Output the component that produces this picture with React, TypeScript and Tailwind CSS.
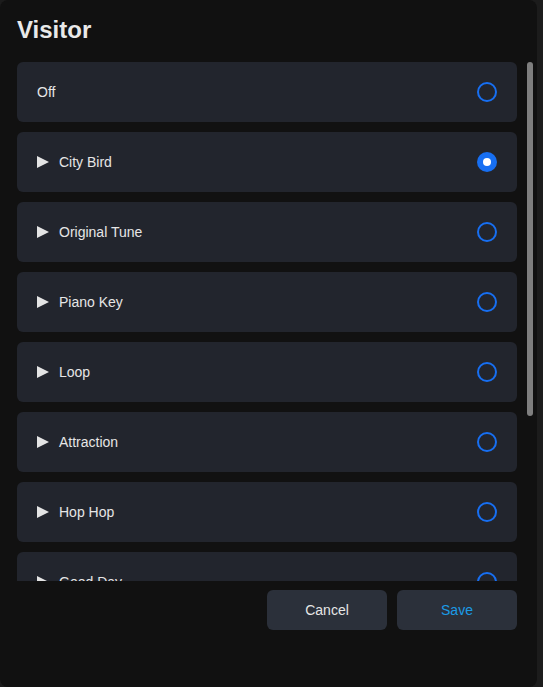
import React, { useState } from "react";

const sounds = ["City Bird", "Original Tune", "Piano Key", "Loop", "Attraction", "Hop Hop", "Good Day"];

const Radio: React.FC<{ checked: boolean }> = ({ checked }) =>
  checked ? (
    <span className="flex h-5 w-5 items-center justify-center rounded-full bg-[#176ff2]">
      <span className="h-2 w-2 rounded-full bg-white" />
    </span>
  ) : (
    <span className="h-5 w-5 rounded-full border-2 border-[#176ff2]" />
  );

const PlayIcon = () => (
  <svg width="12" height="12" viewBox="0 0 12 12" className="shrink-0">
    <path d="M0 0 L12 6 L0 12 Z" fill="#e4e4e4" />
  </svg>
);

export default function App() {
  const [selected, setSelected] = useState("City Bird");

  return (
    <div className="h-[687px] w-full bg-[#1c1c1c] font-['Liberation_Sans',Arial,sans-serif]">
      <div className="flex h-full w-[537px] flex-col rounded-lg bg-[#111111]">
        <h1 className="px-[17px] pt-[14px] text-2xl leading-8 font-bold text-[#e9e9e9]">Visitor</h1>

        <div className="mt-4 flex h-[519px] overflow-hidden">
          {/* list */}
          <div className="ml-[17px] flex w-[500px] shrink-0 flex-col gap-[10px]">
            <button
              onClick={() => setSelected("Off")}
              className="flex h-[60px] shrink-0 items-center justify-between rounded-md bg-[#22252d] pb-px pl-5 pr-5 text-left"
            >
              <span className="text-sm leading-4 text-[#e6e6e6]">Off</span>
              <Radio checked={selected === "Off"} />
            </button>
            {sounds.map((s) => (
              <button
                key={s}
                onClick={() => setSelected(s)}
                className="flex h-[60px] shrink-0 items-center justify-between rounded-md bg-[#22252d] pb-px pl-5 pr-5 text-left"
              >
                <span className="flex items-center gap-[10px] text-sm leading-4 text-[#e6e6e6]">
                  <PlayIcon />
                  {s}
                </span>
                <Radio checked={selected === s} />
              </button>
            ))}
          </div>
          {/* scrollbar */}
          <div className="ml-[10px] w-[6px]">
            <div className="h-[354px] w-[6px] rounded-full bg-[#7f7f7f]" />
          </div>
        </div>

        <div className="mt-[9px] flex justify-end gap-[10px] pr-[20px]">
          <button className="h-10 w-[120px] rounded-md bg-[#2b303a] text-sm text-[#e6e6e6]">Cancel</button>
          <button className="h-10 w-[120px] rounded-md bg-[#2b303a] text-sm text-[#1b9be6]">Save</button>
        </div>
      </div>
    </div>
  );
}
